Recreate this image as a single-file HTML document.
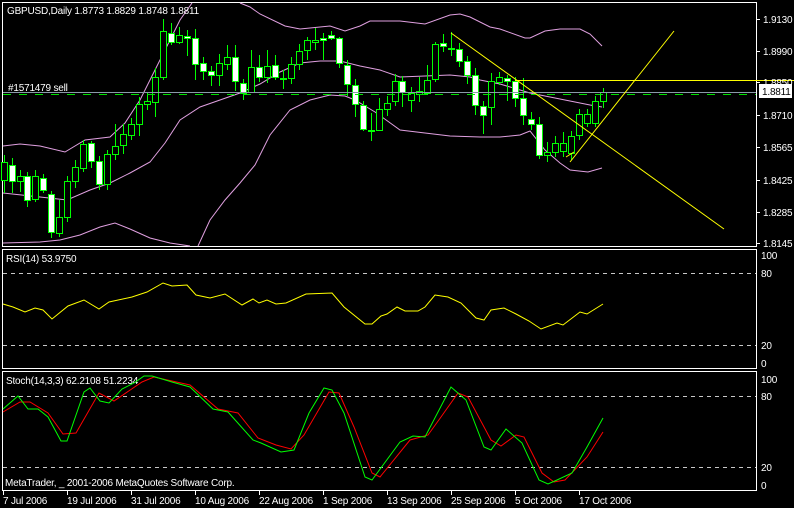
<!DOCTYPE html>
<html><head><meta charset="utf-8"><style>
html,body{margin:0;padding:0;background:#000;width:794px;height:508px;overflow:hidden}
svg{display:block}
text{font-family:"Liberation Sans",sans-serif;font-size:10px;fill:#fff;letter-spacing:-0.2px}
</style></head><body>
<svg id="s" width="794" height="508" xmlns="http://www.w3.org/2000/svg">
<rect width="794" height="508" fill="#000"/>
<rect x="2.5" y="2.5" width="754" height="244" fill="none" stroke="#fff"/>
<rect x="2.5" y="249.5" width="754" height="119" fill="none" stroke="#fff"/>
<rect x="2.5" y="371.5" width="754" height="119" fill="none" stroke="#fff"/>
<g id="bb" fill="none" stroke="#e0a0e0" stroke-width="1"></g>
<g id="cd"></g>
<line x1="3" y1="92.5" x2="756" y2="92.5" stroke="#8a9aa8"/>
<line x1="3" y1="94.5" x2="756" y2="94.5" stroke="#00e000" stroke-dasharray="8,8"/>
<text x="8" y="91">#1571479 sell</text>
<g stroke="#ffff00" fill="none">
<line x1="451" y1="33" x2="724" y2="229"/>
<line x1="570" y1="162" x2="674" y2="31"/>
<line x1="515" y1="80.5" x2="794" y2="80.5"/>
<line x1="566" y1="157" x2="574" y2="152"/>
</g>
<text x="7" y="14">GBPUSD,Daily  1.8773 1.8829 1.8748 1.8811</text>
<g id="ax"></g>
<rect x="759" y="84" width="33" height="14" fill="#fff"/>
<text x="762" y="95" style="fill:#000">1.8811</text>
<g stroke="#c8c8c8" stroke-dasharray="4,4"><line x1="3" y1="273.5" x2="756" y2="273.5"/><line x1="3" y1="345.5" x2="756" y2="345.5"/>
<line x1="3" y1="396.5" x2="756" y2="396.5"/><line x1="3" y1="467.5" x2="756" y2="467.5"/></g>
<text x="6" y="262">RSI(14) 53.9750</text>
<text x="761" y="259">100</text><text x="761" y="277">80</text><text x="761" y="349">20</text><text x="761" y="367">0</text>
<text x="6" y="384">Stoch(14,3,3) 62.2108 51.2234</text>
<text x="761" y="383">100</text><text x="761" y="400">80</text><text x="761" y="471">20</text><text x="761" y="489">0</text>
<polyline fill="none" stroke="#ffff00" points="3,304 13,307 25,312 35,308 43,310 52,319 68,306 84,300 99,309 109,302 132,297 147,292 163,283 172,286 187,285 196,295 210,298 225,294 242,305 253,299 259,303 267,300 276,304 286,303 306,294 332,293 344,307 365,324 372,324 381,316 387,314 397,307 405,311 418,311 425,307 435,295 448,297 461,303 476,318 484,320 491,310 504,308 516,314 529,321 541,329 557,323 563,325 580,312 587,314 603,304"/>
<polyline fill="none" stroke="#ff0000" points="3,412 20,402 30,402 48,413 63,434 76,433 99,393 114,401 142,382 154,377 190,385 218,409 238,413 258,438 276,445 291,449 304,435 329,392 339,393 354,427 372,473 380,477 410,440 428,435 441,417 458,393 468,397 491,440 501,446 516,435 524,437 542,473 554,482 565,480 587,457 603,432"/>
<polyline fill="none" stroke="#00ff00" points="3,409 18,396 28,409 38,409 48,417 61,441 67,441 84,392 90,388 100,401 109,403 122,389 134,383 144,376 152,376 172,382 190,387 213,409 228,412 253,440 261,443 281,452 294,450 309,413 324,388 332,390 344,413 365,477 372,480 400,442 413,436 425,437 451,387 466,400 484,447 491,450 506,429 522,443 539,480 548,484 557,480 572,473 587,447 603,418"/>
<text x="5" y="486">MetaTrader, _ 2001-2006 MetaQuotes Software Corp.</text>
<g id="dt"></g>
</svg>
<script>
var NS="http://www.w3.org/2000/svg";
function el(p,n,a){var e=document.createElementNS(NS,n);for(var k in a)e.setAttribute(k,a[k]);p.appendChild(e);return e;}
var bb=document.getElementById('bb');
var bands=[
"3,146 20,144 40,146 65,152 85,140 110,137 125,123 140,100 160,60 180,20 192,3",
"240,3 250,7 260,14 285,26 300,29 330,26 345,31 360,26 370,21 400,21 425,24 450,15 460,14 470,17 490,27 500,29 525,38 530,38 545,31 560,29 580,29 590,34 602,46",
"3,193 40,197 67,200 90,190 110,183 130,173 150,162 165,143 180,120 200,107 220,100 240,93 260,84 280,72 300,63 320,61 340,61 360,66 380,70 400,77 425,76 450,75 470,77 480,80 500,84 530,93 560,99 590,105 602,107",
"3,243 40,242 60,240 80,235 100,227 115,223 130,229 150,238 170,243 190,246",
"198,246 210,220 225,200 240,183 255,165 270,135 290,110 310,100 330,95 345,96 355,100 375,112 400,130 425,133 450,136 480,137 500,137 520,135 530,131 545,150 560,163 570,170 588,172 602,168"];
bands.forEach(function(p){el(bb,'polyline',{points:p});});
var C=[[4,162,180,155,193,0],[12,165,181,158,193,1],[20,176,181,170,192,0],[27,176,200,172,207,1],[35,176,199,170,202,0],[43,178,190,174,193,1],[51,194,232,191,238,1],[59,217,233,200,237,0],[67,181,217,176,222,0],[75,167,181,160,188,0],[83,144,168,140,172,0],[91,143,161,141,168,1],[99,161,184,156,190,1],[107,154,184,150,190,0],[115,146,154,124,160,0],[123,134,145,124,154,0],[131,124,135,118,140,0],[139,104,124,97,136,0],[147,101,104,92,110,0],[155,77,102,68,117,0],[163,31,77,19,80,0],[171,33,42,23,45,1],[179,35,42,27,44,0],[187,36,38,30,56,1],[195,38,64,29,80,1],[203,63,71,57,80,1],[211,71,75,66,86,1],[219,63,75,54,86,0],[227,57,64,45,70,0],[235,57,81,45,91,1],[243,83,93,79,100,1],[251,67,92,50,92,0],[259,67,77,55,82,1],[267,66,77,50,83,0],[275,65,77,55,80,1],[283,78,79,70,89,0],[291,64,78,57,84,0],[299,51,64,44,70,0],[307,40,50,37,60,0],[315,40,42,28,50,0],[323,38,40,33,60,1],[331,35,38,31,40,1],[339,38,63,37,68,1],[347,65,84,60,96,1],[355,85,104,79,117,1],[363,105,129,101,131,1],[371,130,131,113,141,0],[379,109,130,98,131,0],[387,103,109,96,116,0],[395,81,101,74,106,0],[402,81,92,76,107,1],[411,93,100,87,112,0],[419,91,94,77,102,0],[427,80,93,65,95,0],[435,44,79,42,82,0],[443,43,46,34,52,1],[451,48,49,32,56,0],[459,49,61,43,67,1],[467,61,75,56,84,1],[475,75,105,68,115,1],[483,106,115,101,134,1],[491,81,107,73,125,0],[499,77,82,72,85,0],[507,78,81,75,101,1],[515,81,98,77,107,1],[523,98,115,78,125,1],[531,119,124,112,130,1],[539,124,155,117,159,1],[547,152,155,142,162,0],[555,143,152,136,157,0],[563,143,151,132,157,0],[571,136,153,131,160,0],[579,114,135,109,140,0],[587,114,123,109,127,0],[595,101,123,96,127,0],[603,92,101,88,108,0]];
var cd=document.getElementById('cd');
C.forEach(function(c){var x=c[0]+.5;
el(cd,'line',{x1:x,y1:c[3],x2:x,y2:c[4],stroke:'#00ff00'});
var h=Math.max(1,c[2]-c[1]);
el(cd,'rect',{x:c[0]-2.5,y:c[1]+.5,width:6,height:h,fill:c[5]?'#fff':'#000',stroke:'#00ff00'});});
var ax=document.getElementById('ax');
[[19,'1.9130'],[51,'1.8990'],[82,'1.8850'],[115,'1.8710'],[147,'1.8565'],[180,'1.8425'],[212,'1.8285'],[243,'1.8145']].forEach(function(a){
el(ax,'line',{x1:756,y1:a[0]+.5,x2:760,y2:a[0]+.5,stroke:'#fff'});
var t=el(ax,'text',{x:763,y:a[0]+4});t.textContent=a[1];});
var dt=document.getElementById('dt');
[[3,'7 Jul 2006'],[67,'19 Jul 2006'],[131,'31 Jul 2006'],[195,'10 Aug 2006'],[259,'22 Aug 2006'],[323,'1 Sep 2006'],[387,'13 Sep 2006'],[451,'25 Sep 2006'],[515,'5 Oct 2006'],[579,'17 Oct 2006']].forEach(function(d){
el(dt,'line',{x1:d[0]+.5,y1:491,x2:d[0]+.5,y2:495,stroke:'#fff'});
var t=el(dt,'text',{x:d[0],y:504});t.textContent=d[1];});
</script>
</body></html>
